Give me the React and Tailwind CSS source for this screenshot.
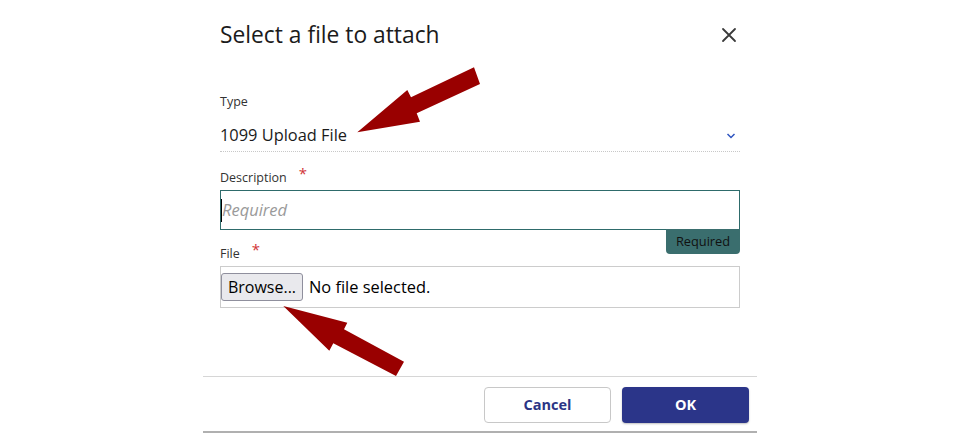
import React from "react";

export default function App() {
  return (
    <div className="relative w-[960px] h-[434px] bg-white overflow-hidden text-[#1b1b1b]" style={{ fontFamily: '"Open Sans", "Noto Sans", sans-serif' }}>
      <div className="mx-auto w-[554px] h-full flex flex-col">
        {/* Header */}
        <div className="h-[70px] px-[17px] flex items-center justify-between">
          <h1 className="text-[22.8px] leading-[32px] text-[#1b1b1b]">Select a file to attach</h1>
          <button className="w-[18px] h-[18px] mr-[2px] flex items-center justify-center">
            <svg width="16" height="16" viewBox="0 0 16 16">
              <path d="M2 2 L14 14 M14 2 L2 14" stroke="#3a3a3a" strokeWidth="1.8" strokeLinecap="round" />
            </svg>
          </button>
        </div>

        {/* Body */}
        <div className="px-[17px] flex flex-col flex-1">
          <div className="mt-[24px] text-[12.5px] leading-[16px] text-[#333]">Type</div>
          <div className="mt-[10px] h-[32px] flex items-center justify-between border-b border-dotted border-[#c8c8c8]">
            <span className="text-[16.4px] text-[#1b1b1b]">1099 Upload File</span>
            <svg width="10" height="6" viewBox="0 0 10 6" className="mr-[4px]">
              <path d="M1.5 1 L5 4.5 L8.5 1" fill="none" stroke="#2f55c0" strokeWidth="1.5" />
            </svg>
          </div>

          <div className="mt-[18px] flex items-start text-[12.5px] leading-[16px] text-[#333]">
            <span>Description</span>
            <span className="ml-[12px] -mt-[5px] text-[15px] text-[#d13438]">*</span>
          </div>
          <div className="relative mt-[4px]">
            <div className="h-[40px] border border-[#2e6b6b] flex items-center">
              <span className="w-[1px] h-[23px] bg-black"></span>
              <span className="text-[16.5px] italic text-[#9a9a9a]">Required</span>
            </div>
            <div className="absolute right-0 top-[39px] w-[74px] h-[25px] bg-[#3a6e6e] rounded-b-[4px] flex items-center justify-center text-[12.8px] text-[#111]">
              Required
            </div>
          </div>

          <div className="mt-[16px] flex items-start text-[12.5px] leading-[16px] text-[#333]">
            <span>File</span>
            <span className="ml-[12px] -mt-[5px] text-[15px] text-[#d13438]">*</span>
          </div>
          <div className="mt-[4px] h-[42px] border border-[#cccccc] flex items-center">
            <button className="h-[28px] w-[82px] bg-[#e9e9ed] border border-[#8f8f9d] rounded-[3px] text-[16px] text-black flex items-center justify-center">
              Browse...
            </button>
            <span className="ml-[6px] text-[16.4px] text-black">No file selected.</span>
          </div>
        </div>

        {/* Footer */}
        <div className="h-[57px] border-t border-[#d6d6d6] border-b-2 border-b-[#b0b0b0] flex items-center justify-end gap-[11px] pr-[8px] pt-[2px] mb-[1px]">
          <button className="w-[127px] h-[36px] bg-white border border-[#c8c8c8] rounded-[4px] text-[14.5px] font-bold text-[#2b3585]">Cancel</button>
          <button className="w-[127px] h-[36px] bg-[#2b3589] rounded-[4px] text-[14.5px] font-bold text-white shadow-[0_1px_2px_rgba(0,0,0,0.25)]">OK</button>
        </div>
      </div>

      {/* Annotation arrows */}
      <svg className="absolute inset-0 pointer-events-none" width="960" height="434" viewBox="0 0 960 434">
        <polygon points="357.3,132.3 407.3,90 411,97.3 474,67.3 480,84 416.7,113.3 420,121.7" fill="#990000" />
        <polygon points="283.3,306 347.3,322.7 344,329.3 404,361.7 396,376 333.3,343.3 329.3,350.7" fill="#990000" />
      </svg>
    </div>
  );
}
